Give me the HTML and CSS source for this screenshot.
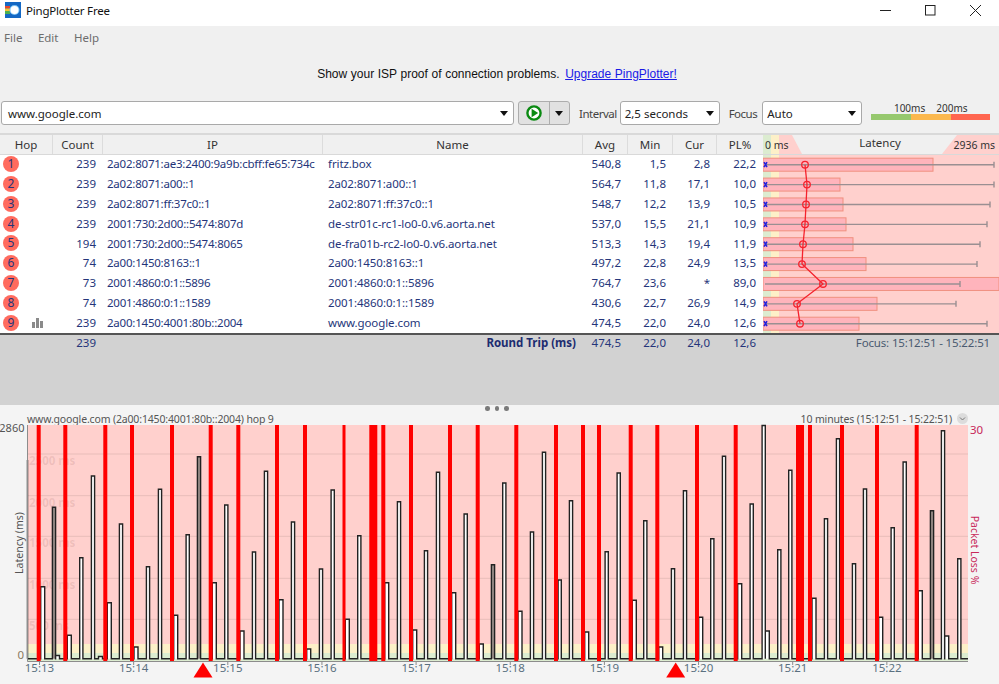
FILE: index.html
```html
<!DOCTYPE html>
<html lang="en">
<head>
    <meta charset="UTF-8">
    <title>PingPlotter Free</title>
    <link rel="stylesheet" href="styles.css">
</head>
<body>
    <!-- title bar -->
    <div class="titlebar">
        <svg class="app-icon" width="16" height="16" viewBox="0 0 16 16">
            <rect width="16" height="16" fill="#1468c4"/>
            <rect x="0" y="4" width="5" height="2.5" fill="#e8452c"/>
            <rect x="0" y="6.5" width="5" height="2.5" fill="#f4c430"/>
            <rect x="0" y="9" width="5" height="3" fill="#4caf50"/>
            <circle cx="9.5" cy="8" r="5" fill="#7cc4f4"/>
            <circle cx="9.5" cy="8" r="4" fill="#fff"/>
        </svg>
        <span class="app-title">PingPlotter Free</span>
        <div class="win-buttons">
            <svg width="45" height="22" viewBox="0 0 45 22"><path d="M17 10.5H28" stroke="#222" fill="none"/></svg>
            <svg width="45" height="22" viewBox="0 0 45 22"><rect x="17.5" y="5.5" width="9.5" height="9.5" stroke="#222" fill="none"/></svg>
            <svg width="45" height="22" viewBox="0 0 45 22"><path d="M17 5L28 16M28 5L17 16" stroke="#222" fill="none"/></svg>
        </div>
    </div>

    <!-- menu -->
    <div class="menubar">
        <span>File</span>
        <span>Edit</span>
        <span>Help</span>
    </div>

    <div class="promo">
        Show your ISP proof of connection problems. <a href="#">Upgrade PingPlotter!</a>
    </div>

    <!-- target and interval -->
    <div class="toolbar">
        <div class="combo combo-target">www.google.com<i class="arrow"></i></div>
        <div class="play-group">
            <div class="play-btn">
                <svg width="16" height="16" viewBox="0 0 16 16">
                    <circle cx="8" cy="8" r="6.6" fill="#fff" stroke="#0a8a12" stroke-width="2.4"/>
                    <path d="M5.6 3.8L12.2 8L5.6 12.2Z" fill="#0a8a12"/>
                </svg>
            </div>
            <div class="play-more"><i class="arrow"></i></div>
        </div>
        <label class="tool-label label-interval">Interval</label>
        <div class="combo combo-small">2,5 seconds<i class="arrow"></i></div>
        <label class="tool-label label-focus">Focus</label>
        <div class="combo combo-small">Auto<i class="arrow"></i></div>
        <div class="legend">
            <div class="legend-text"><span>100ms</span><span>200ms</span></div>
            <div class="legend-bar"><i class="good"></i><i class="warn"></i><i class="bad"></i></div>
        </div>
    </div>

    <!-- hop table -->
    <div class="hop-table">
        <div class="row head">
            <div>Hop</div>
            <div>Count</div>
            <div>IP</div>
            <div>Name</div>
            <div>Avg</div>
            <div>Min</div>
            <div>Cur</div>
            <div>PL%</div>
            <svg class="lat-head" width="236" height="19" viewBox="0 0 236 19">
                <rect width="236" height="19" fill="#ffd0cd"/>
                <rect width="8" height="19" fill="#dcecd0"/>
                <rect x="8" width="8" height="19" fill="#fdf0c8"/>
                <path d="M29 0L39 19H179L194 0Z" fill="#f0f0f0"/>
                <text x="2" y="14">0 ms</text>
                <text class="lat-title" x="117" y="12" text-anchor="middle">Latency</text>
                <text x="232" y="14" text-anchor="end">2936 ms</text>
            </svg>
        </div>
        <div class="hop-body">
            <div class="hop-rows">
                <div class="row"><div class="hop"><b>1</b></div><div class="num">239</div><div class="ip">2a02:8071:ae3:2400:9a9b:cbff:fe65:734c</div><div class="name">fritz.box</div><div class="num">540,8</div><div class="num">1,5</div><div class="num">2,8</div><div class="num">22,2</div></div>
                <div class="row"><div class="hop"><b>2</b></div><div class="num">239</div><div class="ip">2a02:8071:a00::1</div><div class="name">2a02:8071:a00::1</div><div class="num">564,7</div><div class="num">11,8</div><div class="num">17,1</div><div class="num">10,0</div></div>
                <div class="row"><div class="hop"><b>3</b></div><div class="num">239</div><div class="ip">2a02:8071:ff:37c0::1</div><div class="name">2a02:8071:ff:37c0::1</div><div class="num">548,7</div><div class="num">12,2</div><div class="num">13,9</div><div class="num">10,5</div></div>
                <div class="row"><div class="hop"><b>4</b></div><div class="num">239</div><div class="ip">2001:730:2d00::5474:807d</div><div class="name">de-str01c-rc1-lo0-0.v6.aorta.net</div><div class="num">537,0</div><div class="num">15,5</div><div class="num">21,1</div><div class="num">10,9</div></div>
                <div class="row"><div class="hop"><b>5</b></div><div class="num">194</div><div class="ip">2001:730:2d00::5474:8065</div><div class="name">de-fra01b-rc2-lo0-0.v6.aorta.net</div><div class="num">513,3</div><div class="num">14,3</div><div class="num">19,4</div><div class="num">11,9</div></div>
                <div class="row"><div class="hop"><b>6</b></div><div class="num">74</div><div class="ip">2a00:1450:8163::1</div><div class="name">2a00:1450:8163::1</div><div class="num">497,2</div><div class="num">22,8</div><div class="num">24,9</div><div class="num">13,5</div></div>
                <div class="row"><div class="hop"><b>7</b></div><div class="num">73</div><div class="ip">2001:4860:0:1::5896</div><div class="name">2001:4860:0:1::5896</div><div class="num">764,7</div><div class="num">23,6</div><div class="num">*</div><div class="num">89,0</div></div>
                <div class="row"><div class="hop"><b>8</b></div><div class="num">74</div><div class="ip">2001:4860:0:1::1589</div><div class="name">2001:4860:0:1::1589</div><div class="num">430,6</div><div class="num">22,7</div><div class="num">26,9</div><div class="num">14,9</div></div>
                <div class="row"><div class="hop"><b>9</b><svg class="graph-icon" width="11" height="10" viewBox="0 0 11 10"><path d="M0 4h3v6H0zM4 0h3v10H4zM8 3h3v7H8z" fill="#8a8a8a"/></svg></div><div class="num">239</div><div class="ip">2a00:1450:4001:80b::2004</div><div class="name">www.google.com</div><div class="num">474,5</div><div class="num">22,0</div><div class="num">24,0</div><div class="num">12,6</div></div>
            </div>
            <svg id="latencyGraph" class="lat-graph" width="236" height="178" viewBox="763 155 236 178"></svg>
        </div>
        <div class="row summary">
            <div></div>
            <div class="num">239</div>
            <div></div>
            <div class="num round-trip">Round Trip (ms)</div>
            <div class="num">474,5</div>
            <div class="num">22,0</div>
            <div class="num">24,0</div>
            <div class="num">12,6</div>
            <div class="focus">Focus: 15:12:51 - 15:22:51</div>
        </div>
    </div>

    <!-- time graph -->
    <div class="graph-panel">
        <div class="grip"><i></i><i></i><i></i></div>
        <div class="graph-head">
            <span>www.google.com (2a00:1450:4001:80b::2004) hop 9</span>
            <span class="graph-range">10 minutes (15:12:51 - 15:22:51)</span>
            <svg width="11" height="11" viewBox="0 0 11 11">
                <circle cx="5.5" cy="5.5" r="5.5" fill="#dcdcdc"/>
                <path d="M3 4.5L5.5 7L8 4.5" stroke="#777" fill="none"/>
            </svg>
        </div>
        <svg id="timeGraph" class="time-graph" width="999" height="257" viewBox="0 425 999 257"></svg>
    </div>

    <script src="chart.js"></script>
</body>
</html>
```

FILE: styles.css
```css
/* page */
html, body {
    margin: 0;
    height: 684px;
    overflow: hidden;
}

body {
    font-family: "Noto Sans", sans-serif;
    font-size: 11.5px;
    background-color: #f0f0f0;
    color: #222;
}

/* title bar */
.titlebar {
    display: flex;
    align-items: flex-start;
    height: 26px;
    background-color: white;
}

.app-icon {
    margin: 2px 5px 0 5px;
}

.app-title {
    font-size: 11.5px;
    letter-spacing: -0.2px;
    line-height: 21px;
    color: #111;
}

.win-buttons {
    display: flex;
    margin-left: auto;
    margin-right: 1px;
}

/* menu */
.menubar {
    display: flex;
    gap: 15.5px;
    height: 24px;
    padding-left: 4px;
    line-height: 23px;
    color: #6d6d6d;
}

.promo {
    height: 51px;
    padding-right: 5px;
    line-height: 49px;
    text-align: center;
    font-family: "Liberation Sans", sans-serif;
    font-size: 12px;
    word-spacing: 0.3px;
    color: #111;
}

.promo a {
    color: #1a1ae6;
    margin-left: 2px;
}

/* toolbar */
.toolbar {
    display: flex;
    align-items: center;
    height: 24px;
    padding-left: 1px;
    margin-bottom: 8px;
}

.combo {
    position: relative;
    box-sizing: border-box;
    height: 24px;
    line-height: 23px;
    padding-left: 6px;
    background-color: white;
    border: 1px solid #a9a9a9;
    border-radius: 3px;
}

.combo-target {
    width: 513px;
}

.combo-small {
    width: 100px;
    padding-left: 4px;
}

.arrow {
    position: absolute;
    right: 5px;
    top: 9px;
    border-left: 4px solid transparent;
    border-right: 4px solid transparent;
    border-top: 5px solid #111;
}

.play-group {
    display: flex;
    box-sizing: border-box;
    width: 52px;
    height: 24px;
    margin-left: 4px;
    background-color: #e1e1e1;
    border: 1px solid #adadad;
    border-radius: 3px;
}

.play-btn {
    display: flex;
    align-items: center;
    justify-content: center;
    width: 30px;
    border-right: 1px solid #adadad;
}

.play-more {
    position: relative;
    flex: 1;
}

.play-more .arrow {
    right: 6px;
}

.tool-label {
    color: #444;
    letter-spacing: -0.5px;
}

.label-interval {
    margin: 0 3px 0 9px;
}

.label-focus {
    margin: 0 5px 0 9px;
}

.legend {
    align-self: flex-start;
    width: 119px;
    margin-left: 9px;
    font-size: 10px;
    color: #333;
}

.legend-text {
    display: flex;
    gap: 11px;
    justify-content: center;
    height: 13px;
    line-height: 14px;
}

.legend-bar {
    display: flex;
    height: 6px;
}

.legend-bar i {
    flex: 1;
}

.good {
    background-color: #96c86e;
}

.warn {
    background-color: #fbb84e;
}

.bad {
    background-color: #ff6650;
}

/* hop table */
.hop-table {
    border-top: 2px solid #d9d9d9;
    color: #25357a;
}

.row {
    display: grid;
    grid-template-columns: 53px 50px 220px 260px 45px 45px 44px 46px 236px;
    height: 19.875px;
    line-height: 19px;
    white-space: nowrap;
}

.hop-body {
    display: flex;
    height: 178px;
    background-color: white;
    border-bottom: 2px solid #555;
}

.hop-rows {
    width: 763px;
    margin-top: -1px;
}

.hop-rows .row {
    grid-template-columns: 53px 50px 220px 260px 45px 45px 44px 46px;
}

.lat-graph {
    display: block;
    flex: none;
}

.head {
    height: 20px;
    box-sizing: border-box;
    border-bottom: 1px solid #d9d9d9;
    color: #333;
    text-align: center;
}

.head > div {
    border-right: 1px solid #dcdcdc;
}

.head > div:nth-child(8) {
    border-right: none;
}

.lat-head {
    display: block;
    overflow: visible;
}

.lat-head text {
    font-size: 10.5px;
    fill: #333;
}

.lat-head .lat-title {
    font-size: 11.5px;
}

.hop {
    display: flex;
    align-items: center;
    padding-left: 3px;
}

.hop b {
    width: 16px;
    height: 16px;
    line-height: 15px;
    border-radius: 50%;
    background-color: #ff6b5e;
    text-align: center;
    font-weight: normal;
    font-size: 12px;
}

.graph-icon {
    margin-left: 13px;
}

.num {
    text-align: right;
    padding-right: 7px;
}

.ip {
    padding-left: 4px;
    letter-spacing: -0.22px;
}

.name {
    padding-left: 5px;
    letter-spacing: -0.08px;
}

.summary {
    height: 70px;
    background-color: #d2d2d2;
    line-height: 15px;
}

.round-trip {
    font-weight: bold;
    color: #1c2c70;
}

.focus {
    text-align: right;
    padding-right: 9px;
    letter-spacing: -0.15px;
    color: #4a5a70;
}

/* time graph */
.graph-panel {
    height: 279px;
    background-color: #f4f4f4;
    border-bottom: 2px solid #3a3a3a;
}

.grip {
    display: flex;
    justify-content: center;
    gap: 5px;
    height: 7px;
    padding: 1px 5px 0 0;
    box-sizing: border-box;
}

.grip i {
    width: 4.5px;
    height: 4.5px;
    border-radius: 50%;
    background-color: #7a7a7a;
}

.graph-head {
    display: flex;
    align-items: center;
    height: 13px;
    padding: 0 31px 0 27px;
    font-size: 10.5px;
    letter-spacing: -0.15px;
    color: #555;
}

.graph-range {
    margin-left: auto;
    margin-right: 5px;
}

.time-graph {
    display: block;
    overflow: visible;
}

.time-graph text {
    font-family: "Noto Sans", sans-serif;
    font-size: 11.5px;
}

.time-graph .axis-title {
    font-size: 10.5px;
}

.time-graph .axis-max {
    font-size: 11px;
}

.axis-time {
    fill: #5a7080;
}

.axis-label {
    fill: #555;
}

.axis-zero {
    fill: #8a7a60;
}

.axis-loss {
    fill: #c8285a;
}

.axis-grid {
    fill: rgba(120, 60, 60, 0.13);
    font-weight: bold;
}
```

FILE: chart.js
```js
const SVG_NS = 'http://www.w3.org/2000/svg';

function add(parent, tag, attrs, text) {
    const el = document.createElementNS(SVG_NS, tag);
    for (const key in attrs) {
        el.setAttribute(key, attrs[key]);
    }
    if (text) {
        el.textContent = text;
    }
    parent.appendChild(el);
    return el;
}

// hop: bar end, line end, average marker
const hops = [
    { bar: 933, end: 994, avg: 805 },
    { bar: 840, end: 994, avg: 807 },
    { bar: 843, end: 990, avg: 806 },
    { bar: 846, end: 987, avg: 805 },
    { bar: 853, end: 980, avg: 803 },
    { bar: 866, end: 977, avg: 802 },
    { bar: 999, end: 960, avg: 823 },
    { bar: 877, end: 956, avg: 797 },
    { bar: 859, end: 987, avg: 800 },
];

function drawLatency() {
    const svg = document.getElementById('latencyGraph');
    add(svg, 'rect', { x: 763, y: 155, width: 236, height: 178, fill: '#ffd0cd' });
    add(svg, 'rect', { x: 763, y: 155, width: 8, height: 178, fill: '#dcecd0' });
    add(svg, 'rect', { x: 771, y: 155, width: 8, height: 178, fill: '#fdf0c8' });

    hops.forEach(function(hop, i) {
        const y = 164.7 + i * 19.875;
        add(svg, 'rect', {
            x: 763, y: y - 6.5, width: hop.bar - 763, height: 13,
            fill: '#ffb4bc', stroke: '#f0907f',
        });
        add(svg, 'path', {
            d: `M765 ${y}H${hop.end}M${hop.end} ${y - 3}V${y + 3}`,
            stroke: '#9a8f92', 'stroke-width': 1.4, fill: 'none',
        });
        if (i !== 6) {
            add(svg, 'path', {
                d: `M764 ${y - 2.5}L767 ${y + 2.5}M767 ${y - 2.5}L764 ${y + 2.5}`,
                stroke: '#2222dd', 'stroke-width': 1.6, fill: 'none',
            });
        }
    });

    const points = hops.map(function(hop, i) {
        return `${hop.avg},${164.7 + i * 19.875}`;
    });
    add(svg, 'polyline', { points: points.join(' '), stroke: '#f5222d', 'stroke-width': 1.3, fill: 'none' });
    hops.forEach(function(hop, i) {
        add(svg, 'circle', {
            cx: hop.avg, cy: 164.7 + i * 19.875, r: 3.3,
            fill: 'none', stroke: '#f5222d', 'stroke-width': 1.3,
        });
    });
}

// spikes: x, top y, and whether the sample range is filled in grey
const spikes = [
    [42.7, 586.7], [54, 507.3, 1], [57.5, 655.5], [69.3, 635.3], [81.3, 557.7], [93, 476],
    [100.5, 656.5], [109.3, 602.7], [121, 524], [136, 647], [148, 566.7], [160, 489.3],
    [175.7, 615.3], [187.7, 534.7], [199, 456.7, 1], [214.3, 582.7], [226.3, 505], [242, 631],
    [254, 552], [266, 471.3], [281, 599.7], [293, 522], [308.7, 649], [321, 569], [332.7, 490],
    [347.3, 619.3], [359.3, 535.7], [386.7, 582.7], [399, 501.7], [414.7, 630], [426, 550.7],
    [438, 472.3], [453.7, 592.7], [465.7, 514], [481.3, 644], [493, 564.7, 1], [504.3, 483],
    [520, 611.3], [532, 532], [544, 452.3], [559.7, 580], [571, 500.7], [586.7, 632],
    [606.7, 551.7], [618.7, 473], [634.3, 600.3], [645.3, 520.7], [660.7, 647], [673, 568.7],
    [685, 490.7], [700.7, 617.3], [712.3, 538.7], [724, 456.3], [739.7, 583.7], [751.7, 504],
    [763.7, 425.5], [767.3, 631], [779.3, 549.7], [790.3, 470.3], [814, 598.3], [826, 518.7],
    [838, 438.7], [854, 563.7], [865, 489], [880.7, 617.3], [892.7, 527.7], [904.7, 462],
    [920.3, 590.7], [932, 510.7, 1], [943, 430.7], [946.7, 636], [959.3, 558.7],
];

// packet loss marks: x, width
const losses = [
    [38.7, 4], [65.3, 4], [105.3, 4], [132, 4], [172, 4], [210.7, 4], [238.3, 4], [277, 4],
    [305, 4], [344, 3], [373.3, 8], [383.3, 4], [411, 4], [450, 4], [477.7, 4], [516.3, 4],
    [556, 4], [583, 4], [599, 4], [630.7, 4], [657.3, 4], [697, 4], [735.7, 4], [800, 8],
    [810, 4], [842, 4], [877, 4], [916.7, 4],
];

const BASE_Y = 658.7;
const LEFT = 27;
const RIGHT = 968;

function drawTime() {
    const svg = document.getElementById('timeGraph');

    // zones
    add(svg, 'rect', { x: LEFT, y: 425, width: RIGHT - LEFT, height: 219, fill: '#ffd0cd' });
    add(svg, 'rect', { x: LEFT, y: 644, width: RIGHT - LEFT, height: 9, fill: '#fdf0c8' });
    add(svg, 'rect', { x: LEFT, y: 653, width: RIGHT - LEFT, height: 8, fill: '#dcecd0' });

    // grid
    const grid = [[454, '2500 ms'], [495.7, '2000 ms'], [536.3, '1500 ms'], [578.3, '1000 ms'], [619.3, '500 ms']];
    grid.forEach(function(line) {
        add(svg, 'path', { d: `M${LEFT} ${line[0]}H${RIGHT}`, stroke: '#e8bdb9', fill: 'none' });
        add(svg, 'text', { x: 29, y: line[0] + 11, class: 'axis-grid' }, line[1]);
    });

    // latency line
    let d = `M${LEFT + 1} ${BASE_Y}`;
    spikes.forEach(function(s) {
        const half = s[1] > 580 ? 2 : 1.6;
        d += `H${s[0] - half}V${s[1]}H${s[0] + half}V${BASE_Y}`;
        add(svg, 'rect', {
            x: s[0] - half, y: s[1], width: half * 2, height: BASE_Y - s[1],
            fill: s[2] ? '#9a8e8a' : '#fff',
        });
    });
    d += `H${RIGHT}`;
    add(svg, 'path', { d: d, stroke: '#222', 'stroke-width': 1.4, fill: 'none' });
    add(svg, 'path', { d: `M${LEFT + 0.5} 460V${BASE_Y}`, stroke: '#333', 'stroke-width': 1.5, fill: 'none' });

    // packet loss
    losses.forEach(function(l) {
        add(svg, 'rect', { x: l[0] - l[1] / 2, y: 425, width: l[1], height: 236, fill: '#ff0000' });
    });

    // axes
    add(svg, 'path', { d: `M${LEFT + 0.5} 425V661.5H${RIGHT}`, stroke: '#8c8c8c', fill: 'none' });

    for (let i = 0; i < 10; i++) {
        const x = 39.5 + i * 94.15;
        add(svg, 'path', { d: `M${x} 661V665`, stroke: '#8c8c8c', fill: 'none' });
        add(svg, 'text', { x: x, y: 671.5, 'text-anchor': 'middle', class: 'axis-time' }, `15:${13 + i}`);
    }

    add(svg, 'text', { x: 24.5, y: 432, 'text-anchor': 'end', class: 'axis-label axis-max' }, '2860');
    add(svg, 'text', { x: 24, y: 659, 'text-anchor': 'end', class: 'axis-zero' }, '0');
    add(svg, 'text', { x: 970, y: 434, class: 'axis-loss' }, '30');
    add(svg, 'text', {
        x: 0, y: 0, 'text-anchor': 'middle', class: 'axis-label axis-title',
        transform: 'translate(23 543) rotate(-90)',
    }, 'Latency (ms)');
    add(svg, 'text', {
        x: 0, y: 0, 'text-anchor': 'middle', class: 'axis-loss axis-title',
        transform: 'translate(971 550) rotate(90)',
    }, 'Packet Loss %');

    // alert markers
    [203, 675.7].forEach(function(x) {
        add(svg, 'path', { d: `M${x} 662.5L${x + 9.5} 677.5H${x - 9.5}Z`, fill: '#ff0000' });
    });
}

drawLatency();
drawTime();
```
